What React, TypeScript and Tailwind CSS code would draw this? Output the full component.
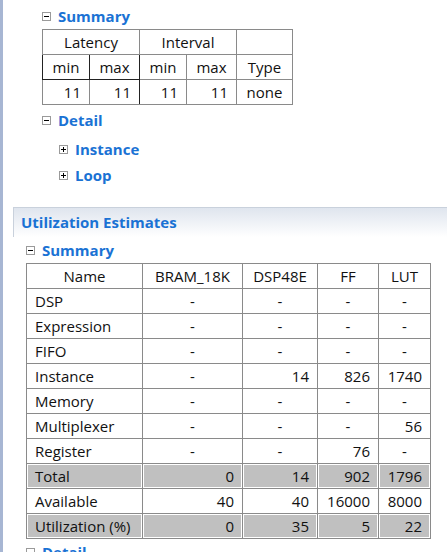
import React from "react";

const FONT = { fontFamily: '"Open Sans", "Noto Sans CJK SC", sans-serif' };

const Toggle: React.FC<{ open?: boolean }> = ({ open }) => (
  <svg width="9" height="9" viewBox="0 0 9 9" className="shrink-0">
    <rect x="0.5" y="0.5" width="8" height="8" fill="white" stroke="#9a9a9a" />
    <line x1="2" y1="4.5" x2="7" y2="4.5" stroke="#000" />
    {!open && <line x1="4.5" y1="2" x2="4.5" y2="7" stroke="#000" />}
  </svg>
);

const Heading: React.FC<{ label: string; open?: boolean; className?: string }> = ({
  label,
  open,
  className,
}) => (
  <div className={`flex items-center gap-[7px] h-[26px] ${className || ""}`}>
    <Toggle open={open} />
    <span className="text-[15px] font-bold text-[#1a72d4] leading-none">{label}</span>
  </div>
);

type Row = { name: string; vals: string[]; total?: boolean };

const ROWS: Row[] = [
  { name: "DSP", vals: ["-", "-", "-", "-"] },
  { name: "Expression", vals: ["-", "-", "-", "-"] },
  { name: "FIFO", vals: ["-", "-", "-", "-"] },
  { name: "Instance", vals: ["-", "14", "826", "1740"] },
  { name: "Memory", vals: ["-", "-", "-", "-"] },
  { name: "Multiplexer", vals: ["-", "-", "-", "56"] },
  { name: "Register", vals: ["-", "-", "76", "-"] },
  { name: "Total", vals: ["0", "14", "902", "1796"], total: true },
  { name: "Available", vals: ["40", "40", "16000", "8000"] },
  { name: "Utilization (%)", vals: ["0", "35", "5", "22"], total: true },
];

const COLS = [116, 100, 75, 61, 52];

export default function App() {
  const cell = "border border-[#8a8a8a] h-[25px] p-0 text-[15px] leading-none font-normal";
  return (
    <div className="flex w-[447px] h-[552px] overflow-hidden bg-white text-[#111]" style={FONT}>
      <div className="w-[3px] shrink-0 bg-[#a7b6d3]" />
      <div className="flex-1 min-w-0">
        {/* performance summary */}
        <div className="pl-[39px] pt-[3px]">
          <Heading label="Summary" open />
          <table className="border-collapse mt-0">
            <tbody>
              <tr>
                <td colSpan={2} className={`${cell} w-[97px] text-center`}>Latency</td>
                <td colSpan={2} className={`${cell} w-[97px] text-center`}>Interval</td>
                <td className={`${cell} w-[56px]`} />
              </tr>
              <tr>
                <td className={`${cell} w-[47px] text-center border-[#222]`}>min</td>
                <td className={`${cell} w-[50px] text-center border-[#222]`}>max</td>
                <td className={`${cell} w-[47px] text-center`}>min</td>
                <td className={`${cell} w-[50px] text-center`}>max</td>
                <td className={`${cell} w-[56px] text-center`}>Type</td>
              </tr>
              <tr>
                <td className={`${cell} text-right pr-[8px]`}>11</td>
                <td className={`${cell} text-right pr-[8px] border-r-[#222]`}>11</td>
                <td className={`${cell} text-right pr-[8px]`}>11</td>
                <td className={`${cell} text-right pr-[8px]`}>11</td>
                <td className={`${cell} text-center`}>none</td>
              </tr>
            </tbody>
          </table>
          <Heading label="Detail" open className="mt-[2px]" />
          <div className="pl-[17px]">
            <Heading label="Instance" className="mt-[3px]" />
            <Heading label="Loop" />
          </div>
        </div>

        {/* utilization */}
        <div className="ml-[10px] mt-[19px] h-[30px] flex items-center pl-[7px] border-t border-l border-[#c9d1dc] bg-gradient-to-b from-[#dfe5ee] to-white">
          <span className="text-[15px] font-bold text-[#1a72d4] leading-none">Utilization Estimates</span>
        </div>
        <div className="pl-[23px]">
          <Heading label="Summary" open />
          <table className="border-collapse table-fixed">
            <colgroup>
              {COLS.map((w, i) => (
                <col key={i} style={{ width: w }} />
              ))}
            </colgroup>
            <tbody>
              <tr>
                <td className={`${cell} text-center border-[#3b8ae0]`}>Name</td>
                <td className={`${cell} text-center`}>BRAM_18K</td>
                <td className={`${cell} text-center`}>DSP48E</td>
                <td className={`${cell} text-center`}>FF</td>
                <td className={`${cell} text-center`}>LUT</td>
              </tr>
              {ROWS.map((r) => {
                const bg = r.total ? "bg-[#c0c0c0] shadow-[inset_0_0_0_1px_white]" : "";
                return (
                  <tr key={r.name}>
                    <td className={`${cell} ${bg} text-left pl-[8px]`}>{r.name}</td>
                    {r.vals.map((v, i) => (
                      <td
                        key={i}
                        className={`${cell} ${bg} ${v === "-" ? "text-center" : "text-right pr-[8px]"}`}
                      >
                        {v}
                      </td>
                    ))}
                  </tr>
                );
              })}
            </tbody>
          </table>
          <Heading label="Detail" open />
        </div>
      </div>
    </div>
  );
}
